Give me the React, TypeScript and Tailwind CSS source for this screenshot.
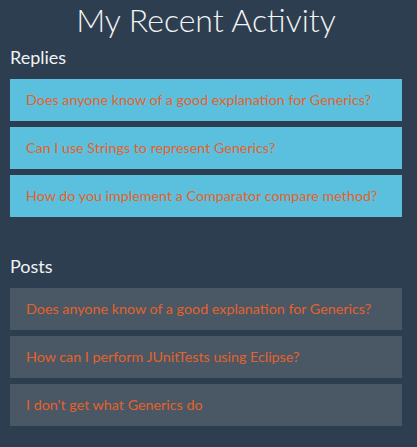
const replies = [
  'Does anyone know of a good explanation for Generics?',
  'Can I use Strings to represent Generics?',
  'How do you implement a Comparator compare method?',
];

const posts = [
  'Does anyone know of a good explanation for Generics?',
  'How can I perform JUnitTests using Eclipse?',
  "I don't get what Generics do",
];

function Item({ text, kind }: { text: string; kind: 'reply' | 'post' }) {
  return (
    <div
      className={
        'h-[42px] flex items-center pl-[16px] text-[14.3px] text-[#e5622b] ' +
        (kind === 'reply' ? 'bg-[#5bc0de]' : 'bg-[#4a5764]')
      }
    >
      {text}
    </div>
  );
}

export default function App() {
  return (
    <div className="min-h-[447px] w-[417px] bg-[#2c3e50] font-['Lato','Open_Sans',sans-serif]">
      <div className="ml-[10px] w-[392px]">
        <h1 className="text-center text-[32px] leading-[40px] font-light text-[#f2f2f2]">
          My Recent Activity
        </h1>
        <h2 className="mt-[5px] text-[18px] leading-[24px] text-[#f2f2f2]">Replies</h2>
        <div className="mt-[10px] flex flex-col gap-[6px]">
          {replies.map((r) => (
            <Item key={r} text={r} kind="reply" />
          ))}
        </div>
        <h2 className="mt-[37px] text-[18px] leading-[24px] text-[#f2f2f2]">Posts</h2>
        <div className="mt-[10px] flex flex-col gap-[6px]">
          {posts.map((p) => (
            <Item key={p} text={p} kind="post" />
          ))}
        </div>
      </div>
    </div>
  );
}
